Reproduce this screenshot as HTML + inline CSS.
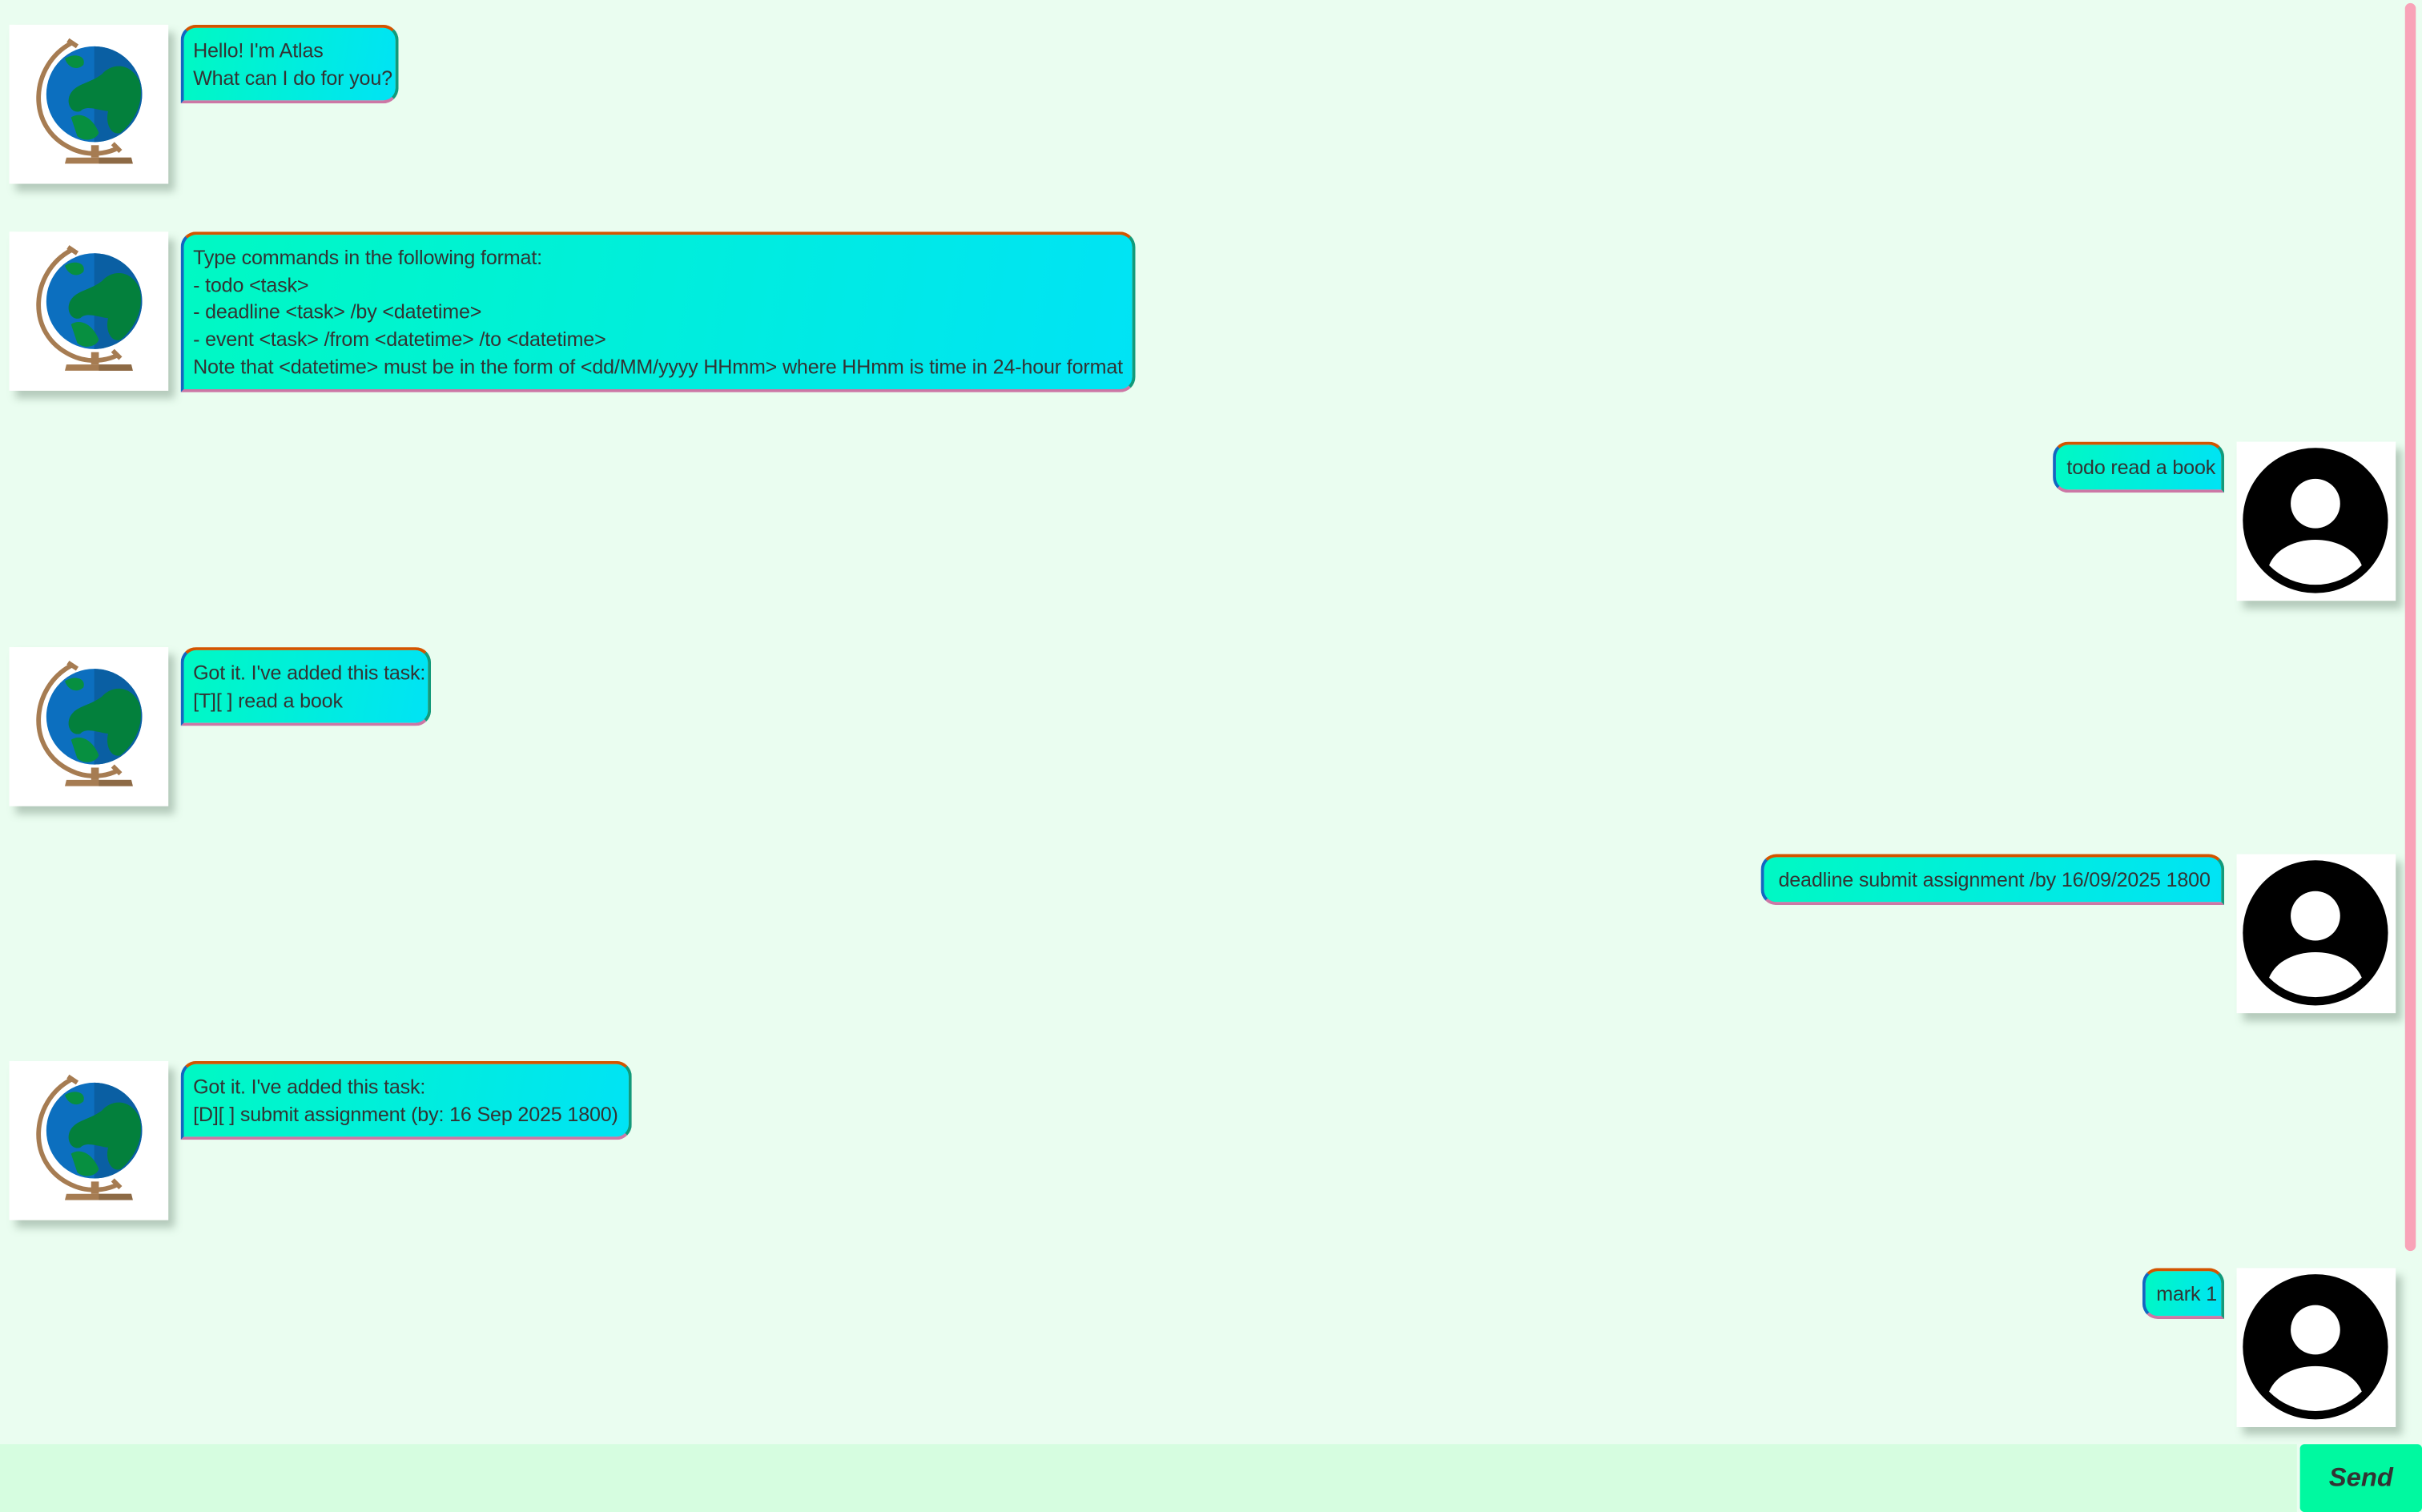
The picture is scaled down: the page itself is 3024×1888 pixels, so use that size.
<!DOCTYPE html>
<html><head><meta charset="utf-8">
<style>
html,body{margin:0;padding:0;width:3024px;height:1888px;overflow:hidden;background:#eafdf0;}
#root{position:absolute;left:0;top:0;width:1568px;height:979px;transform:scale(1.92857);transform-origin:0 0;background:#eafdf0;font-family:"Liberation Sans",sans-serif;}
.av{position:absolute;width:103px;height:103px;background:#fff;box-shadow:4px 5px 5px rgba(80,110,90,0.35);}
.av svg{display:block;width:103px;height:103px}
.b{position:absolute;box-sizing:border-box;border-style:solid;border-width:2px;border-color:#d35400 #139a7a #cc77a5 #1565c0;background:linear-gradient(100deg,#00f9c3 0%,#00e3f5 100%);color:#333;font-size:13px;letter-spacing:-0.08px;line-height:17.7px;padding:6px 6px 5px 6px;white-space:nowrap;}
.bot{border-radius:10px 10px 10px 0;}
.usr{border-radius:10px 10px 0 10px;padding-left:7px;padding-right:7px;}
.sb{position:absolute;left:1557px;top:2px;width:7px;height:808px;border-radius:4px;background:#f9a3b8;}
.inp{position:absolute;left:0;top:935px;width:1487px;height:44px;background:#d6fde0;}
.send{position:absolute;left:1489px;top:935px;width:79px;height:44px;background:#00f9a0;border-radius:3px;color:#333;font-weight:bold;font-style:italic;font-size:17px;line-height:44px;text-align:center;}
</style></head><body>
<div id="root">
<svg width="0" height="0" style="position:absolute">
<defs>
<symbol id="globe" viewBox="0 0 103 103">
<path d="M40 12 C14 26 10 66 40 80 C50 85 62 84 70 80" fill="none" stroke="#a67c52" stroke-width="3"/>
<path d="M38 10 l6 4 M67 77 l5 5" stroke="#a67c52" stroke-width="3"/>
<circle cx="55" cy="45" r="31" fill="#0c6fbf"/>
<path d="M55 14 A31 31 0 0 1 55 76 Z" fill="#0a5fa3"/>
<path d="M60 32 C66 25 78 24 84 36 C88 48 82 62 72 70 C66 72 62 64 64 56 C56 55 50 52 46 56 C40 58 36 50 40 44 C44 38 52 38 60 32 Z" fill="#03803c"/>
<path d="M40 60 C46 56 54 60 58 70 C56 75 48 76 44 72 Z" fill="#078f40"/>
<path d="M36 22 C42 18 50 20 48 26 C44 30 38 28 36 22 Z" fill="#078f40"/>
<rect x="53" y="78" width="5" height="8" fill="#a67c52"/>
<path d="M37 86 H79 L80 90 H36 Z" fill="#a67c52"/>
<path d="M58 78 V90 H80 L79 86 H58" fill="#8d6a45"/>
</symbol>
<symbol id="user" viewBox="0 0 103 103">
<circle cx="51" cy="51" r="47" fill="#000"/>
<circle cx="51" cy="40" r="16" fill="#fff"/>
<path d="M21 80 C30 58 72 58 81 80 A42 42 0 0 1 21 80 Z" fill="#fff"/>
</symbol>
</defs></svg>

<div class="av" style="left:6px;top:16px"><svg><use href="#globe"/></svg></div>
<div class="b bot" style="left:117px;top:16px;width:141px;height:51px">Hello! I'm Atlas<br>What can I do for you?</div>

<div class="av" style="left:6px;top:150px"><svg><use href="#globe"/></svg></div>
<div class="b bot" style="left:117px;top:150px;width:618px;height:104px">Type commands in the following format:<br>- todo &lt;task&gt;<br>- deadline &lt;task&gt; /by &lt;datetime&gt;<br>- event &lt;task&gt; /from &lt;datetime&gt; /to &lt;datetime&gt;<br>Note that &lt;datetime&gt; must be in the form of &lt;dd/MM/yyyy HHmm&gt; where HHmm is time in 24-hour format</div>

<div class="b usr" style="left:1329px;top:286px;width:111px;height:33px;text-align:right">todo read a book</div>
<div class="av" style="left:1448px;top:286px"><svg><use href="#user"/></svg></div>

<div class="av" style="left:6px;top:419px"><svg><use href="#globe"/></svg></div>
<div class="b bot" style="left:117px;top:419px;width:162px;height:51px">Got it. I've added this task:<br>[T][ ] read a book</div>

<div class="b usr" style="left:1140px;top:553px;width:300px;height:33px;text-align:right">deadline submit assignment /by 16/09/2025 1800</div>
<div class="av" style="left:1448px;top:553px"><svg><use href="#user"/></svg></div>

<div class="av" style="left:6px;top:687px"><svg><use href="#globe"/></svg></div>
<div class="b bot" style="left:117px;top:687px;width:292px;height:51px">Got it. I've added this task:<br>[D][ ] submit assignment (by: 16 Sep 2025 1800)</div>

<div class="b usr" style="left:1387px;top:821px;width:53px;height:33px;text-align:right">mark 1</div>
<div class="av" style="left:1448px;top:821px"><svg><use href="#user"/></svg></div>

<div class="sb"></div>
<div class="inp"></div>
<div class="send">Send</div>
</div>
</body></html>
